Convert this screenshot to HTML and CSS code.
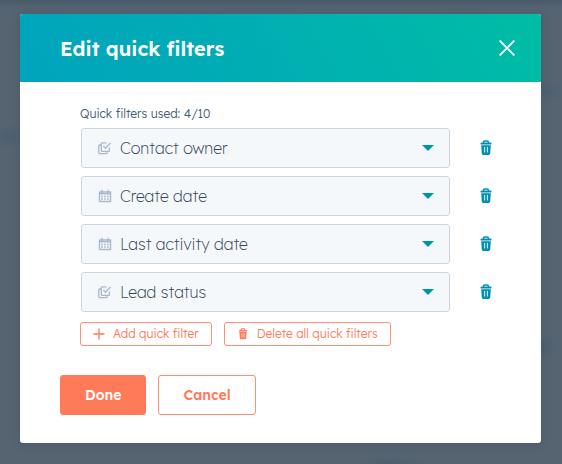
FILE: index.html
```html
<!DOCTYPE html>
<html lang="en">
<head>
<meta charset="utf-8">
<meta name="viewport" content="width=device-width, initial-scale=1">
<title>Edit quick filters</title>
<link rel="stylesheet" href="styles.css">
</head>
<body>
<svg class="sprite" aria-hidden="true">
  <symbol id="trash" viewBox="0 0 12 16">
    <path d="M3.5 3V2.2Q3.5 1 4.7 1h2.6q1.2 0 1.2 1.2V3" fill="none" stroke="currentColor" stroke-width="1.4"/>
    <path d="M1.6 2.6h8.8q1 0 1 1v1H.6v-1q0-1 1-1z" fill="currentColor"/>
    <path fill-rule="evenodd" d="M1.2 5.2h9.6l-.6 8.4q-.1 1.4-1.5 1.4H3.3q-1.4 0-1.5-1.4zM4.2 7v5.6h.9V7zM6.9 7v5.6h.9V7z" fill="currentColor"/>
  </symbol>
  <symbol id="choices" viewBox="0 0 14 14">
    <path d="M8.5 1.8H4.2q-.9 0-.9.9v6.8q0 .9.9.9h6.3q.9 0 .9-.9V6.5M3.3 4H1.7q-.9 0-.9.9v6.9q0 .9.9.9h6.5q.9 0 .9-.9v-1.4M5.3 5l2.2 2.3 5-5.3" fill="none" stroke="currentColor" stroke-width="1.3"/>
  </symbol>
  <symbol id="calendar" viewBox="0 0 14 14">
    <path d="M1.5 3h11v9.5h-11zM1 4.8h12M4 .8v3.4M10 .8v3.4" fill="none" stroke="currentColor" stroke-width="1.4"/>
    <path d="M3.2 7.5h7.6M3.2 10h7.6" stroke="currentColor" stroke-width="1.7" stroke-dasharray="1.8 1.1"/>
  </symbol>
</svg>
<main class="modal" role="dialog" aria-labelledby="title">
  <header class="modal-header">
    <h1 id="title">Edit quick filters</h1>
    <button class="icon-button close" type="button" aria-label="Close">
      <svg viewBox="0 0 14 14"><path d="M.5.5l13 13M13.5.5l-13 13" stroke="currentColor" stroke-width="1.6" fill="none"/></svg>
    </button>
  </header>
  <form class="modal-body">
    <p class="usage">Quick filters used: 4/10</p>
    <ul class="filters">
      <li class="filter">
        <div class="field"><svg class="field-icon"><use href="#choices"/></svg><select aria-label="Quick filter 1"><option>Contact owner</option></select><svg class="caret" viewBox="0 0 12 6"><path d="M0 0h12L6 6z"/></svg></div>
        <button class="icon-button remove" type="button" aria-label="Delete Contact owner"><svg><use href="#trash"/></svg></button>
      </li>
      <li class="filter">
        <div class="field"><svg class="field-icon"><use href="#calendar"/></svg><select aria-label="Quick filter 2"><option>Create date</option></select><svg class="caret" viewBox="0 0 12 6"><path d="M0 0h12L6 6z"/></svg></div>
        <button class="icon-button remove" type="button" aria-label="Delete Create date"><svg><use href="#trash"/></svg></button>
      </li>
      <li class="filter">
        <div class="field"><svg class="field-icon"><use href="#calendar"/></svg><select aria-label="Quick filter 3"><option>Last activity date</option></select><svg class="caret" viewBox="0 0 12 6"><path d="M0 0h12L6 6z"/></svg></div>
        <button class="icon-button remove" type="button" aria-label="Delete Last activity date"><svg><use href="#trash"/></svg></button>
      </li>
      <li class="filter">
        <div class="field"><svg class="field-icon"><use href="#choices"/></svg><select aria-label="Quick filter 4"><option>Lead status</option></select><svg class="caret" viewBox="0 0 12 6"><path d="M0 0h12L6 6z"/></svg></div>
        <button class="icon-button remove" type="button" aria-label="Delete Lead status"><svg><use href="#trash"/></svg></button>
      </li>
    </ul>
    <div class="list-actions">
      <button class="small-button" type="button"><svg viewBox="0 0 12 12"><path d="M6 .5v11M.5 6h11" stroke="currentColor" stroke-width="1.4"/></svg>Add quick filter</button>
      <button class="small-button" type="button"><svg><use href="#trash"/></svg>Delete all quick filters</button>
    </div>
  </form>
  <footer class="modal-footer">
    <button class="button primary" type="button">Done</button>
    <button class="button" type="button">Cancel</button>
  </footer>
</main>
</body>
</html>
```
FILE: styles.css
```css
* {
  box-sizing: border-box;
}

body {
  min-height: 100vh;
  margin: 0;
  padding: 14px 21px 21px 20px;
  font-family: Lexend, Inter, "Liberation Sans", sans-serif;
  font-weight: 300;
  color: #33475b;
  background:
    radial-gradient(ellipse 16px 10px at calc(100% - 14px) 92px, #4c6072, transparent),
    radial-gradient(ellipse 12px 12px at calc(100% - 16px) 347px, #4c5f6d, transparent),
    radial-gradient(ellipse 36px 8px at 390px 464px, #4b5e6c, transparent),
    radial-gradient(ellipse 20px 14px at 10px 137px, #4c6072, transparent),
    linear-gradient(#485969, #566472 8px) #566472;
}

button,
select {
  font: inherit;
  cursor: pointer;
}

svg {
  display: block;
  flex: none;
}

.sprite {
  position: absolute;
  width: 0;
  height: 0;
}

.modal {
  background: #fff;
  border-radius: 3px;
  overflow: hidden;
  box-shadow: 0 1px 10px rgba(45, 62, 80, 0.3);
}

.modal-header {
  display: flex;
  align-items: center;
  justify-content: space-between;
  height: 68px;
  padding: 0 26px 0 40px;
  color: #fff;
  background: linear-gradient(60deg, #00a4bd, #00afb2 50%, #00bda5);
}

h1 {
  margin: 0;
  padding-top: 2px;
  font-size: 20px;
  line-height: 28px;
  font-weight: 600;
}

.icon-button {
  display: flex;
  justify-content: center;
  align-items: center;
  padding: 0;
  border: 0;
  background: none;
  color: inherit;
}

.close svg {
  width: 16px;
  height: 16px;
}

.modal-body {
  padding: 21px 47px 0 60px;
}

.usage {
  margin: 0 0 3px;
  font-size: 12px;
  line-height: 22px;
  color: #425b76;
}

.filters {
  display: flex;
  flex-direction: column;
  gap: 8px;
  margin: 0;
  padding: 0 0 0 1px;
  list-style: none;
}

.filter {
  display: flex;
  align-items: center;
  gap: 28px;
}

.field {
  flex: 1;
  display: grid;
  align-items: center;
}

.field > * {
  grid-area: 1 / 1;
}

.field-icon {
  z-index: 1;
  width: 14px;
  height: 14px;
  margin-left: 17px;
  color: #a9b9cc;
  pointer-events: none;
}

.field select {
  width: 100%;
  height: 40px;
  padding: 0 40px 0 38px;
  appearance: none;
  border: 1px solid #cbd6e2;
  border-radius: 3px;
  background: #f5f8fa;
  color: #33475b;
  font-size: 16px;
  font-weight: 200;
}

.caret {
  z-index: 1;
  justify-self: end;
  width: 12px;
  height: 6px;
  margin-right: 16px;
  fill: #0091ae;
  pointer-events: none;
}

.remove {
  width: 16px;
  height: 24px;
  color: #0091ae;
}

.remove svg {
  width: 12px;
  height: 16px;
}

.list-actions {
  display: flex;
  gap: 12px;
  margin-top: 10px;
}

.small-button {
  display: flex;
  align-items: center;
  gap: 8px;
  height: 24px;
  padding: 0 12px;
  border: 1px solid #ff8f73;
  border-radius: 3px;
  background: #fff;
  color: #ff7a59;
  font-size: 12px;
  line-height: 18px;
  white-space: nowrap;
}

.small-button svg {
  width: 12px;
  height: 12px;
}

.modal-footer {
  display: flex;
  gap: 12px;
  padding: 29px 40px 28px;
}

.button {
  height: 40px;
  padding: 0 24px;
  border: 1px solid #ff8f73;
  border-radius: 3px;
  background: #fff;
  color: #ff7a59;
  font-size: 14px;
  font-weight: 600;
}

.primary {
  border-color: #ff7a59;
  background: #ff7a59;
  color: #fff;
}
```
